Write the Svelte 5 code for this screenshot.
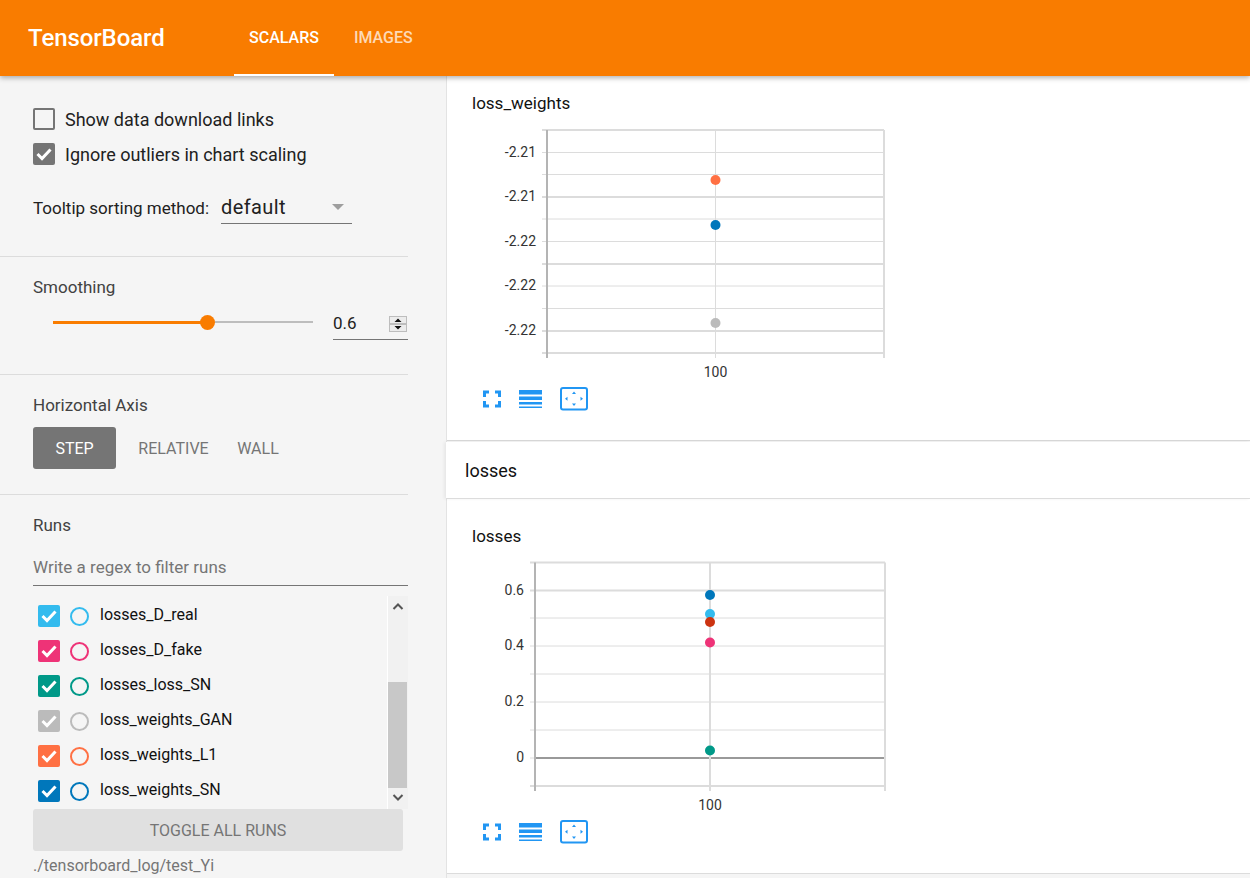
<script lang="ts">
	const runs = [
		{ name: 'losses_D_real', color: '#33bbee' },
		{ name: 'losses_D_fake', color: '#ee3377' },
		{ name: 'losses_loss_SN', color: '#009988' },
		{ name: 'loss_weights_GAN', color: '#bbbbbb' },
		{ name: 'loss_weights_L1', color: '#ff7043' },
		{ name: 'loss_weights_SN', color: '#0077bb' }
	];

	const weightsChart = {
		left: 100,
		right: 437,
		top: 4,
		bottom: 227,
		xDot: 268.5,
		rows: [4, 26.5, 48.5, 71, 93, 115.5, 138, 160, 182.5, 205, 227],
		thick: [71, 138, 205, 227, 4],
		labels: [
			{ y: 26.5, text: '-2.21' },
			{ y: 71, text: '-2.21' },
			{ y: 115.5, text: '-2.22' },
			{ y: 160, text: '-2.22' },
			{ y: 205, text: '-2.22' }
		],
		dots: [
			{ y: 54, color: '#ff7043' },
			{ y: 99, color: '#0077bb' },
			{ y: 197, color: '#bbbbbb' }
		],
		zero: -1,
		xLabel: 100
	};

	const lossesChart = {
		left: 88,
		right: 438,
		top: 3.5,
		bottom: 227,
		xDot: 263,
		rows: [3.5, 31.5, 59, 87, 115, 143, 171, 199, 227],
		thick: [3.5, 31.5, 227],
		labels: [
			{ y: 31.5, text: '0.6' },
			{ y: 87, text: '0.4' },
			{ y: 143, text: '0.2' },
			{ y: 199, text: '0' }
		],
		dots: [
			{ y: 36, color: '#0077bb' },
			{ y: 55, color: '#33bbee' },
			{ y: 63, color: '#cc3311' },
			{ y: 83.5, color: '#ee3377' },
			{ y: 191.5, color: '#009988' }
		],
		zero: 199,
		xLabel: 100
	};
</script>

{#snippet chart(c)}
	<svg class="plot" width="446" height="252" viewBox="0 0 446 252">
		{#each c.rows as y}
			<line x1={c.left - 5} x2={c.right} y1={y} y2={y} stroke="#dcdcdc" stroke-width={c.thick.includes(y) ? 2 : 1} />
		{/each}
		{#if c.zero >= 0}
			<line x1={c.left} x2={c.right} y1={c.zero} y2={c.zero} stroke="#999" stroke-width="2" />
		{/if}
		<line x1={c.left} x2={c.left} y1={c.top} y2={c.bottom + 5} stroke="#b4b4b4" stroke-width="2" />
		<line x1={c.right} x2={c.right} y1={c.top} y2={c.bottom + 5} stroke="#dcdcdc" stroke-width="2" />
		<line x1={c.xDot} x2={c.xDot} y1={c.top} y2={c.bottom + 5} stroke="#dcdcdc" stroke-width={c.zero >= 0 ? 2 : 1} />
		{#each c.labels as l}
			<text x={c.left - 11} y={l.y + 4} text-anchor="end" class="tick">{l.text}</text>
		{/each}
		<text x={c.xDot} y={c.bottom + 24} text-anchor="middle" class="tick">{c.xLabel}</text>
		{#each c.dots as d}
			<circle cx={c.xDot} cy={d.y} r="5" fill={d.color} />
		{/each}
	</svg>
{/snippet}

{#snippet toolbar()}
	<div class="toolbar">
		<svg width="20" height="20" viewBox="0 0 20 20" fill="none" stroke="#2196f3" stroke-width="3">
			<path d="M2.5 8V3H7M13 3h4.500V8M17.500 12v5H13M7 17H2.500v-5" />
		</svg>
		<svg width="24" height="20" viewBox="0 0 24 20" fill="#2196f3">
			<rect x="0" y="1" width="23" height="4.500" />
			<rect x="0" y="7.500" width="23" height="3.500" />
			<rect x="0" y="13" width="23" height="2.500" />
			<rect x="0" y="17.500" width="23" height="1.500" />
		</svg>
		<svg width="28" height="24" viewBox="0 0 28 24" fill="#2196f3">
			<rect x="1" y="1" width="26" height="21.500" rx="2" fill="none" stroke="#2196f3" stroke-width="2" />
			<path d="M14 4.500l2 2.500h-4zM14 19l2-2.500h-4zM5 11.750l2.500-2v4zM23 11.750l-2.500-2v4z" />
		</svg>
	</div>
{/snippet}

<div class="page">
	<header class="topbar">
		<div class="brand">TensorBoard</div>
		<nav class="tabs">
			<div class="tab active">SCALARS</div>
			<div class="tab">IMAGES</div>
		</nav>
	</header>

	<div class="content">
		<aside class="sidebar">
			<section class="options">
				<label class="check-row">
					<span class="box"></span>
					<span>Show data download links</span>
				</label>
				<label class="check-row">
					<span class="box checked">
						<svg width="22" height="22" viewBox="0 0 22 22" fill="none" stroke="#fff" stroke-width="3">
							<path d="M4.500 11l4.500 4.500 8.500-9" />
						</svg>
					</span>
					<span>Ignore outliers in chart scaling</span>
				</label>
				<div class="sort-row">
					<span class="sort-label">Tooltip sorting method:</span>
					<div class="select">
						<span>default</span>
						<span class="caret"></span>
					</div>
				</div>
			</section>

			<section class="smoothing">
				<h3>Smoothing</h3>
				<div class="slider-row">
					<div class="slider">
						<div class="fill"></div>
						<div class="thumb"></div>
						<div class="rest"></div>
					</div>
					<div class="number">
						<span>0.6</span>
						<svg width="18" height="16" viewBox="0 0 18 16">
							<rect x="0.500" y="0.500" width="17" height="15" fill="#ececec" stroke="#bdbdbd" />
							<rect x="0" y="7" width="18" height="2" fill="#bdbdbd" />
							<path d="M9 2.500l3.500 3.500h-7zM9 13.500l3.500-3.500h-7z" fill="#111" />
						</svg>
					</div>
				</div>
			</section>

			<section class="axis">
				<h3>Horizontal Axis</h3>
				<div class="axis-buttons">
					<div class="axis-btn selected">STEP</div>
					<div class="axis-btn relative">RELATIVE</div>
					<div class="axis-btn wall">WALL</div>
				</div>
			</section>

			<section class="runs">
				<h3>Runs</h3>
				<div class="regex">Write a regex to filter runs</div>
				<div class="run-list">
					<div class="run-rows">
						{#each runs as run}
							<div class="run">
								<span class="run-box" style:background={run.color}>
									<svg width="22" height="22" viewBox="0 0 22 22" fill="none" stroke="#fff" stroke-width="3">
										<path d="M4.500 11l4.500 4.500 8.500-9" />
									</svg>
								</span>
								<span class="run-dot" style:border-color={run.color}></span>
								<span class="run-name">{run.name}</span>
							</div>
						{/each}
					</div>
					<div class="scrollbar">
						<svg width="20" height="20" viewBox="0 0 20 20" fill="none" stroke="#555" stroke-width="2">
							<path d="M5.500 13L10 8.500l4.500 4.500" />
						</svg>
						<div class="track"></div>
						<div class="bar"></div>
						<svg width="20" height="21" viewBox="0 0 20 21" fill="none" stroke="#555" stroke-width="2">
							<path d="M5.500 7l4.500 4.500L14.500 7" />
						</svg>
					</div>
				</div>
				<div class="toggle">TOGGLE ALL RUNS</div>
				<div class="logdir">./tensorboard_log/test_Yi</div>
			</section>
		</aside>

		<main class="main">
			<article class="card first">
				<div class="chart-title">loss_weights</div>
				{@render chart(weightsChart)}
				{@render toolbar()}
			</article>
			<div class="group-head">losses</div>
			<article class="card second">
				<div class="chart-title">losses</div>
				{@render chart(lossesChart)}
				{@render toolbar()}
			</article>
		</main>
	</div>
</div>

<style>
	:global(body) {
		margin: 0;
		background: #f5f5f5;
		font-family: Roboto, 'Liberation Sans', sans-serif;
	}

	.page {
		display: flex;
		flex-direction: column;
		width: 1250px;
		height: 878px;
		overflow: hidden;
	}

	.topbar {
		position: relative;
		z-index: 2;
		display: flex;
		align-items: stretch;
		flex: 0 0 76px;
		padding-left: 28px;
		box-sizing: border-box;
		background: #f97c00;
		color: #fff;
		box-shadow: 0 2px 5px rgba(0, 0, 0, 0.3);
	}

	.brand {
		align-self: center;
		width: 206px;
		font-size: 24px;
		font-weight: 500;
		letter-spacing: -0.1px;
	}

	.tabs {
		display: flex;
		gap: 5px;
	}

	.tab {
		display: flex;
		align-items: center;
		padding: 0 15px;
		font-size: 16px;
		font-weight: 500;
		color: rgba(255, 255, 255, 0.72);
		border-bottom: 2px solid transparent;
	}

	.tab.active {
		color: #fff;
		border-bottom-color: #fff;
	}

	.content {
		display: flex;
		flex: 1;
		min-height: 0;
	}

	.sidebar {
		flex: 0 0 447px;
		box-sizing: border-box;
		padding-right: 38px;
		border-right: 1px solid #e3e3e3;
		background: #f5f5f5;
	}

	section {
		box-sizing: border-box;
		padding-left: 33px;
		border-bottom: 1px solid #dcdcdc;
	}

	h3 {
		margin: 0;
		font-size: 17px;
		font-weight: 400;
		line-height: 20px;
		color: #424242;
	}

	.options {
		height: 181px;
		padding-top: 32px;
	}

	.check-row {
		display: flex;
		align-items: center;
		gap: 10px;
		height: 22px;
		margin-bottom: 13px;
		font-size: 18px;
		color: #212121;
	}

	.box {
		box-sizing: border-box;
		width: 22px;
		height: 22px;
		border: 2px solid #757575;
		border-radius: 2px;
	}

	.box.checked {
		border: 0;
		background: #757575;
	}

	.box svg,
	.run-box svg {
		display: block;
	}

	.sort-row {
		display: flex;
		align-items: center;
		gap: 12px;
		margin-top: 26px;
	}

	.sort-label {
		font-size: 17px;
		color: #212121;
	}

	.select {
		display: flex;
		align-items: center;
		justify-content: space-between;
		box-sizing: border-box;
		width: 131px;
		height: 33px;
		border-bottom: 1px solid #757575;
		font-size: 20px;
		letter-spacing: 0.4px;
		color: #212121;
	}

	.caret {
		width: 0;
		height: 0;
		margin-right: 8px;
		border-left: 6px solid transparent;
		border-right: 6px solid transparent;
		border-top: 6px solid #9e9e9e;
	}

	.smoothing {
		height: 118px;
		padding-top: 20px;
	}

	.slider-row {
		display: flex;
		align-items: flex-start;
		gap: 20px;
		margin-top: 12px;
		padding-left: 20px;
	}

	.slider {
		display: flex;
		align-items: center;
		width: 260px;
		height: 20px;
		margin-top: 3px;
	}

	.fill {
		width: 148px;
		height: 3px;
		background: #f97c00;
	}

	.thumb {
		flex: none;
		width: 15px;
		height: 15px;
		margin-left: -1px;
		border-radius: 50%;
		background: #f97c00;
	}

	.rest {
		flex: 1;
		height: 2px;
		background: #bdbdbd;
	}

	.number {
		display: flex;
		align-items: center;
		justify-content: space-between;
		box-sizing: border-box;
		width: 75px;
		height: 31px;
		padding-right: 1px;
		border-bottom: 1px solid #757575;
		font-size: 17px;
		color: #212121;
	}

	.number span {
		margin-top: -3px;
	}

	.number svg {
		margin-top: -1px;
	}

	.axis {
		height: 120px;
		padding-top: 20px;
	}

	.axis-buttons {
		display: flex;
		margin-top: 12px;
	}

	.axis-btn {
		display: flex;
		align-items: center;
		justify-content: center;
		height: 42px;
		font-size: 16px;
		color: #757575;
		border-radius: 3px;
	}

	.axis-btn.selected {
		width: 83px;
		background: #757575;
		color: #fff;
	}

	.axis-btn.relative {
		width: 115px;
	}

	.axis-btn.wall {
		width: 42px;
		margin-left: 6px;
	}

	.runs {
		padding-top: 20px;
		border-bottom: 0;
	}

	.regex {
		box-sizing: border-box;
		height: 39px;
		margin-top: 12px;
		padding-top: 10px;
		border-bottom: 1px solid #757575;
		font-size: 17px;
		color: #757575;
	}

	.run-list {
		display: flex;
		justify-content: space-between;
		height: 213px;
		margin-top: 10px;
	}

	.run-rows {
		padding: 9px 0 0 5px;
	}

	.run {
		display: flex;
		align-items: center;
		height: 22px;
		margin-bottom: 13px;
	}

	.run-box {
		width: 22px;
		height: 22px;
		border-radius: 2px;
	}

	.run-dot {
		box-sizing: border-box;
		width: 19px;
		height: 19px;
		margin-left: 10px;
		border: 2px solid;
		border-radius: 50%;
	}

	.run-name {
		margin: -4px 0 0 11px;
		font-size: 16px;
		color: #111;
	}

	.scrollbar {
		display: flex;
		flex-direction: column;
		width: 20px;
		background: #f1f1f1;
		border-left: 1px solid #fff;
	}

	.track {
		height: 66px;
	}

	.bar {
		width: 19px;
		height: 106px;
		background: #c8c8c8;
	}

	.toggle {
		display: flex;
		align-items: center;
		justify-content: center;
		width: 370px;
		height: 42px;
		border-radius: 3px;
		background: #e0e0e0;
		font-size: 16px;
		color: #757575;
	}

	.logdir {
		margin-top: 5px;
		font-size: 16px;
		color: #757575;
	}

	.main {
		flex: 1;
		display: flex;
		flex-direction: column;
		min-width: 0;
	}

	.card {
		box-sizing: border-box;
		background: #fff;
		padding: 16px 0 0 25px;
	}

	.card.first {
		height: 365px;
		border-bottom: 1px solid #d8d8d8;
	}

	.card.second {
		height: 375px;
		border-bottom: 1px solid #dcdcdc;
		padding-top: 26px;
	}

	.chart-title {
		height: 22px;
		margin-bottom: 12px;
		font-size: 17px;
		line-height: 22px;
		color: #111;
	}

	.plot {
		display: block;
		margin-left: -25px;
	}

	.tick {
		font-size: 14px;
		fill: #333;
		font-family: Roboto, 'Liberation Sans', sans-serif;
	}

	.toolbar {
		display: flex;
		align-items: center;
		gap: 17px;
		margin: 9px 0 0 10px;
	}

	.group-head {
		position: relative;
		display: flex;
		align-items: center;
		flex: 0 0 57px;
		box-sizing: border-box;
		margin: 1px 0 0 -1px;
		padding-left: 19px;
		background: #fff;
		border-bottom: 1px solid #dcdcdc;
		box-shadow: -2px 0 3px rgba(0, 0, 0, 0.06);
		font-size: 18px;
		color: #111;
	}
</style>
